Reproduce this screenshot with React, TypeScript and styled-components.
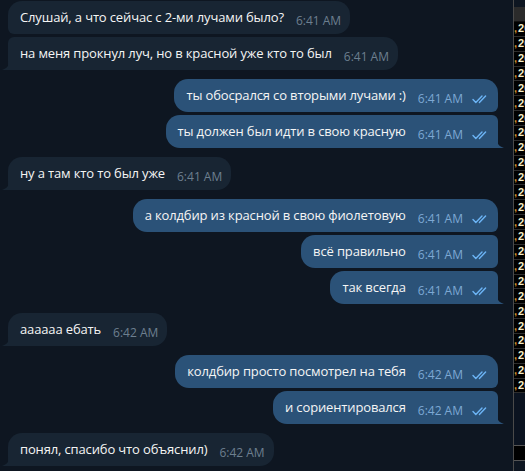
import { createGlobalStyle, styled } from "styled-components";

const Global = createGlobalStyle`
  html, body {
    margin: 0;
    padding: 0;
    background: #0e1621;
  }
  #root {
    width: 525px;
    height: 471px;
    overflow: hidden;
  }
`;

const Screen = styled.div`
  display: flex;
  width: 525px;
  height: 471px;
  overflow: hidden;
  background: #0e1621;
  font-family: "Open Sans", "Noto Sans", sans-serif;
`;

const Chat = styled.div`
  flex: 1;
  display: flex;
  flex-direction: column;
  padding: 1px 15px 0 8px;
`;

const Row = styled.div<{ $out: boolean; $first: boolean }>`
  display: flex;
  justify-content: ${(p) => (p.$out ? "flex-end" : "flex-start")};
  margin-top: ${(p) => (p.$first ? "9px" : "3px")};
  &:first-child {
    margin-top: 0;
  }
`;

const Bubble = styled.div<{ $out: boolean; $top: boolean; $tail: boolean }>`
  position: relative;
  display: flex;
  align-items: flex-end;
  height: 33px;
  box-sizing: border-box;
  padding: 7px 9px 0 12px;
  background: ${(p) => (p.$out ? "#2b5278" : "#182533")};
  border-radius: ${(p) => {
    const big = "14px";
    const small = "6px";
    const near = p.$top ? big : small;
    const bottom = p.$tail ? "0" : small;
    return p.$out
      ? `${big} ${near} ${bottom} ${big}`
      : `${near} ${big} ${big} ${bottom}`;
  }};
`;

const Text = styled.span`
  font-size: 13px;
  line-height: 19px;
  letter-spacing: -0.14px;
  color: #f5f5f5;
  white-space: nowrap;
  align-self: flex-start;
`;

const Meta = styled.span<{ $out: boolean }>`
  display: flex;
  align-items: center;
  gap: 9px;
  margin-left: 12px;
  margin-bottom: 5px;
  font-size: 12px;
  line-height: 16px;
  color: ${(p) => (p.$out ? "#7da8d3" : "#6d7f8f")};
  white-space: nowrap;
`;

const Tail = styled.svg<{ $out: boolean }>`
  position: absolute;
  bottom: 0;
  ${(p) => (p.$out ? "right: -6px; transform: scaleX(-1);" : "left: -6px;")}
`;

const Side = styled.div`
  width: 12px;
  flex: none;
  display: flex;
  flex-direction: column;
  border-left: 1px solid #4a4a4a;
  box-sizing: border-box;
  overflow: hidden;
`;

const SideTop = styled.div`
  height: 7px;
  background: #0e1621;
`;

const SideHead = styled.div`
  height: 15px;
  background: #2b2b2b;
  border-bottom: 1px solid #111;
  box-sizing: border-box;
`;

const Cell = styled.div`
  height: 14.87px;
  box-sizing: border-box;
  background: #000;
  border-bottom: 1px solid #2e2e2e;
  display: flex;
  align-items: center;
  font-family: "Liberation Sans", Arial, sans-serif;
  font-size: 11px;
  font-weight: bold;
  line-height: 13px;
  white-space: nowrap;
`;

const Comma = styled.span`
  color: #d2912a;
  margin-right: 1px;
`;

const Num = styled.span`
  color: #f4ecc8;
`;

const SideFill = styled.div`
  height: 52px;
  background: #0b1320;
  border-bottom: 1px solid #555;
`;

const SideBlack = styled.div`
  height: 14px;
  background: #000;
  border-bottom: 1px solid #555;
`;

const SideRest = styled.div`
  flex: 1;
  background: #0e1621;
`;

type Msg = { out: boolean; text: string; time: string };

const groups: Msg[][] = [
  [
    { out: false, text: "Слушай, а что сейчас с 2-ми лучами было?", time: "6:41 AM" },
    { out: false, text: "на меня прокнул луч, но в красной уже кто то был", time: "6:41 AM" },
  ],
  [
    { out: true, text: "ты обосрался со вторыми лучами :)", time: "6:41 AM" },
    { out: true, text: "ты должен был идти в свою красную", time: "6:41 AM" },
  ],
  [{ out: false, text: "ну а там кто то был уже", time: "6:41 AM" }],
  [
    { out: true, text: "а колдбир из красной в свою фиолетовую", time: "6:41 AM" },
    { out: true, text: "всё правильно", time: "6:41 AM" },
    { out: true, text: "так всегда", time: "6:41 AM" },
  ],
  [{ out: false, text: "аааааа ебать", time: "6:42 AM" }],
  [
    { out: true, text: "колдбир просто посмотрел на тебя", time: "6:42 AM" },
    { out: true, text: "и сориентировался", time: "6:42 AM" },
  ],
  [{ out: false, text: "понял, спасибо что объяснил)", time: "6:42 AM" }],
];

const Checks = () => (
  <svg width="17" height="9" viewBox="0 0 17 9" fill="none">
    <path d="M1 4.6 L3.8 7.6 L10 1" stroke="#6cb4f5" strokeWidth="1.4" strokeLinecap="round" strokeLinejoin="round" />
    <path d="M7.4 7.6 L13.6 1" stroke="#6cb4f5" strokeWidth="1.4" strokeLinecap="round" />
  </svg>
);

const Message = ({ m, first, last }: { m: Msg; first: boolean; last: boolean }) => (
  <Row $out={m.out} $first={first}>
    <Bubble $out={m.out} $top={first} $tail={last}>
      <Text>{m.text}</Text>
      <Meta $out={m.out}>
        {m.time}
        {m.out && <Checks />}
      </Meta>
      {last && (
        <Tail $out={m.out} width="7" height="9" viewBox="0 0 7 9">
          <path d="M7 0 C7 4.5 5 7.5 0 9 L7 9 Z" fill={m.out ? "#2b5278" : "#182533"} />
        </Tail>
      )}
    </Bubble>
  </Row>
);

export default function App() {
  return (
    <>
      <Global />
      <Screen>
        <Chat>
          {groups.map((g, gi) =>
            g.map((m, i) => (
              <Message key={`${gi}-${i}`} m={m} first={i === 0} last={i === g.length - 1} />
            ))
          )}
        </Chat>
        <Side>
          <SideTop />
          <SideHead />
          {Array.from({ length: 25 }).map((_, i) => (
            <Cell key={i}>
              <Comma>,</Comma>
              <Num>20</Num>
            </Cell>
          ))}
          <SideFill />
          <SideBlack />
          <SideRest />
        </Side>
      </Screen>
    </>
  );
}
